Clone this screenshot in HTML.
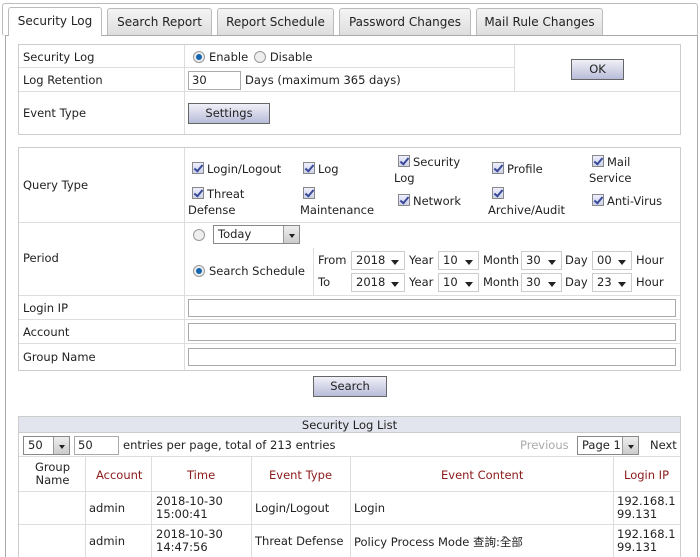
<!DOCTYPE html>
<html><head><meta charset="utf-8"><style>
*{box-sizing:border-box;margin:0;padding:0}
html,body{width:700px;height:557px;overflow:hidden}
body{background:#fff;font-family:"DejaVu Sans","Liberation Sans","Noto Sans CJK TC",sans-serif;font-size:11.5px;color:#222;position:relative}
.a{position:absolute}
.tab{position:absolute;top:8px;height:27px;border:1px solid #bbb;border-bottom:none;background:linear-gradient(#f4f4f4,#dedede);border-radius:3px 3px 0 0;text-align:center;line-height:26px;font-size:12px}
.tab.on{background:#fff;top:7px;height:29px;z-index:2}
.bx{position:absolute;border:1px solid #ccc}
.hl{position:absolute;height:1px;background:#ddd}
.vl{position:absolute;width:1px;background:#ddd}
.t{position:absolute;white-space:nowrap}
.btn{position:absolute;border:1px solid #666;background:linear-gradient(#f0f0f8,#b8bcd8);text-align:center}
.in{position:absolute;border:1px solid #aaa;background:#fff;height:19px;padding-left:3px;line-height:17px}
.cb{display:inline-block;width:12px;height:12px;border:1px solid #888;background:linear-gradient(#eef,#cdd3e8);vertical-align:-1px;margin-right:3px;position:relative}
.cb:after{content:"";position:absolute;left:3px;top:0px;width:3px;height:7px;border:solid #3a4a9a;border-width:0 2px 2px 0;transform:rotate(40deg)}
.rd{display:inline-block;width:12px;height:12px;border:1px solid #999;border-radius:50%;background:#eee;vertical-align:-2px;margin-right:4px;position:relative}
.rd.on:after{content:"";position:absolute;left:2px;top:2px;width:6px;height:6px;border-radius:50%;background:#1565b0}
.sel{position:absolute;border:1px solid #ccc;background:#fff;height:19px;line-height:17px;padding-left:4px}
.sel:after{content:"";position:absolute;right:5px;top:8px;border:4px solid transparent;border-top:5px solid #222;border-bottom:none}
.dd{position:absolute;border:1px solid #888;background:#fff;height:19px;line-height:17px;padding-left:4px}
.dd:before{content:"";position:absolute;right:0;top:0;width:15px;height:17px;background:linear-gradient(#eee,#ccc);border-left:1px solid #999}
.dd:after{content:"";position:absolute;right:4px;top:8px;border:3px solid transparent;border-top:4px solid #222;border-bottom:none}
.r{color:#8b1a1a}
</style></head><body>
<div class="a" style="left:5px;top:35px;width:693px;height:530px;border:1px solid #aaa;border-bottom:none"></div>
<div class="a" style="left:2px;top:3px;width:696px;height:33px;border:1px solid #bbb;border-bottom:none;border-radius:3px"></div>
<div class="tab on" style="left:8px;width:94px">Security Log</div>
<div class="tab" style="left:107px;width:105px">Search Report</div>
<div class="tab" style="left:217px;width:117px">Report Schedule</div>
<div class="tab" style="left:339px;width:132px">Password Changes</div>
<div class="tab" style="left:476px;width:127px">Mail Rule Changes</div>

<div class="bx" style="left:18px;top:44px;width:663px;height:91px"></div>
<div class="hl" style="left:19px;top:67px;width:495px"></div>
<div class="hl" style="left:19px;top:91px;width:661px"></div>
<div class="vl" style="left:184px;top:45px;height:89px"></div>
<div class="vl" style="left:514px;top:45px;height:46px"></div>
<div class="t" style="left:23px;top:50px">Security Log</div>
<div class="t" style="left:23px;top:73px">Log Retention</div>
<div class="t" style="left:23px;top:106px">Event Type</div>
<div class="t" style="left:193px;top:50px"><span class="rd on"></span>Enable <span class="rd" style="margin-left:2px"></span>Disable</div>
<div class="in" style="left:188px;top:71px;width:53px">30</div>
<div class="t" style="left:245px;top:73px">Days (maximum 365 days)</div>
<div class="btn" style="left:188px;top:103px;width:82px;height:21px;line-height:19px">Settings</div>
<div class="btn" style="left:571px;top:59px;width:53px;height:21px;line-height:19px">OK</div>

<div class="bx" style="left:18px;top:147px;width:663px;height:224px"></div>
<div class="hl" style="left:19px;top:222px;width:661px"></div>
<div class="hl" style="left:19px;top:295px;width:661px"></div>
<div class="hl" style="left:19px;top:319px;width:661px"></div>
<div class="hl" style="left:19px;top:343px;width:661px"></div>
<div class="vl" style="left:184px;top:148px;height:222px"></div>
<div class="vl" style="left:313px;top:248px;height:47px"></div>
<div class="t" style="left:23px;top:178px">Query Type</div>
<div class="t" style="left:23px;top:251px">Period</div>
<div class="t" style="left:23px;top:301px">Login IP</div>
<div class="t" style="left:23px;top:325px">Account</div>
<div class="t" style="left:23px;top:350px">Group Name</div>
<div class="t" style="left:192px;top:162px"><span class="cb"></span>Login/Logout</div>
<div class="t" style="left:303px;top:162px"><span class="cb"></span>Log</div>
<div class="t" style="left:398px;top:155px"><span class="cb"></span>Security</div>
<div class="t" style="left:394px;top:171px">Log</div>
<div class="t" style="left:492px;top:162px"><span class="cb"></span>Profile</div>
<div class="t" style="left:592px;top:155px"><span class="cb"></span>Mail</div>
<div class="t" style="left:589px;top:171px">Service</div>
<div class="t" style="left:192px;top:187px"><span class="cb"></span>Threat</div>
<div class="t" style="left:188px;top:203px">Defense</div>
<div class="t" style="left:303px;top:187px"><span class="cb"></span></div>
<div class="t" style="left:300px;top:203px">Maintenance</div>
<div class="t" style="left:398px;top:194px"><span class="cb"></span>Network</div>
<div class="t" style="left:492px;top:187px"><span class="cb"></span></div>
<div class="t" style="left:488px;top:203px">Archive/Audit</div>
<div class="t" style="left:592px;top:194px"><span class="cb"></span>Anti-Virus</div>
<div class="t" style="left:193px;top:228px"><span class="rd"></span></div>
<div class="dd" style="left:213px;top:225px;width:87px">Today</div>
<div class="t" style="left:193px;top:264px"><span class="rd on"></span>Search Schedule</div>
<div class="t" style="left:318px;top:253px">From</div>
<div class="t" style="left:318px;top:275px">To</div>
<div class="sel" style="left:351px;top:251px;width:54px">2018</div>
<div class="sel" style="left:351px;top:273px;width:54px">2018</div>
<div class="t" style="left:409px;top:253px">Year</div><div class="t" style="left:409px;top:275px">Year</div>
<div class="sel" style="left:438px;top:251px;width:41px">10</div>
<div class="sel" style="left:438px;top:273px;width:41px">10</div>
<div class="t" style="left:483px;top:253px">Month</div><div class="t" style="left:483px;top:275px">Month</div>
<div class="sel" style="left:521px;top:251px;width:41px">30</div>
<div class="sel" style="left:521px;top:273px;width:41px">30</div>
<div class="t" style="left:565px;top:253px">Day</div><div class="t" style="left:565px;top:275px">Day</div>
<div class="sel" style="left:592px;top:251px;width:40px">00</div>
<div class="sel" style="left:592px;top:273px;width:40px">23</div>
<div class="t" style="left:636px;top:253px">Hour</div><div class="t" style="left:636px;top:275px">Hour</div>
<div class="in" style="left:188px;top:299px;width:488px;height:18px"></div>
<div class="in" style="left:188px;top:323px;width:488px;height:18px"></div>
<div class="in" style="left:188px;top:348px;width:488px;height:18px"></div>
<div class="btn" style="left:313px;top:376px;width:74px;height:21px;line-height:19px">Search</div>

<div class="a" style="left:18px;top:416px;width:663px;height:160px;border:1px solid #ccc"></div>
<div class="a" style="left:19px;top:417px;width:661px;height:16px;background:#e2e4ee;border-bottom:1px solid #ccc;text-align:center;line-height:16px">Security Log List</div>
<div class="hl" style="left:19px;top:456px;width:661px"></div>
<div class="hl" style="left:19px;top:491px;width:661px"></div>
<div class="hl" style="left:19px;top:524px;width:661px"></div>
<div class="vl" style="left:85px;top:457px;height:100px"></div>
<div class="vl" style="left:151px;top:457px;height:100px"></div>
<div class="vl" style="left:251px;top:457px;height:100px"></div>
<div class="vl" style="left:350px;top:457px;height:100px"></div>
<div class="vl" style="left:613px;top:457px;height:100px"></div>
<div class="dd" style="left:23px;top:436px;width:47px">50</div>
<div class="in" style="left:74px;top:436px;width:45px">50</div>
<div class="t" style="left:123px;top:438px">entries per page, total of 213 entries</div>
<div class="t" style="left:520px;top:438px;color:#aaa">Previous</div>
<div class="dd" style="left:577px;top:436px;width:62px">Page 1</div>
<div class="t" style="left:650px;top:438px">Next</div>
<div class="t" style="left:35px;top:461px;text-align:center;line-height:13px">Group<br>Name</div>
<div class="t r" style="left:96px;top:468px">Account</div>
<div class="t r" style="left:187px;top:468px">Time</div>
<div class="t r" style="left:269px;top:468px">Event Type</div>
<div class="t r" style="left:441px;top:468px">Event Content</div>
<div class="t r" style="left:624px;top:468px">Login IP</div>
<div class="t" style="left:89px;top:501px">admin</div>
<div class="t" style="left:156px;top:495px;line-height:13px">2018-10-30<br>15:00:41</div>
<div class="t" style="left:255px;top:501px">Login/Logout</div>
<div class="t" style="left:354px;top:501px">Login</div>
<div class="t" style="left:617px;top:495px;line-height:13px">192.168.1<br>99.131</div>
<div class="t" style="left:89px;top:534px">admin</div>
<div class="t" style="left:156px;top:528px;line-height:13px">2018-10-30<br>14:47:56</div>
<div class="t" style="left:255px;top:534px">Threat Defense</div>
<div class="t" style="left:354px;top:534px">Policy Process Mode 查詢:全部</div>
<div class="t" style="left:617px;top:528px;line-height:13px">192.168.1<br>99.131</div>
</body></html>
